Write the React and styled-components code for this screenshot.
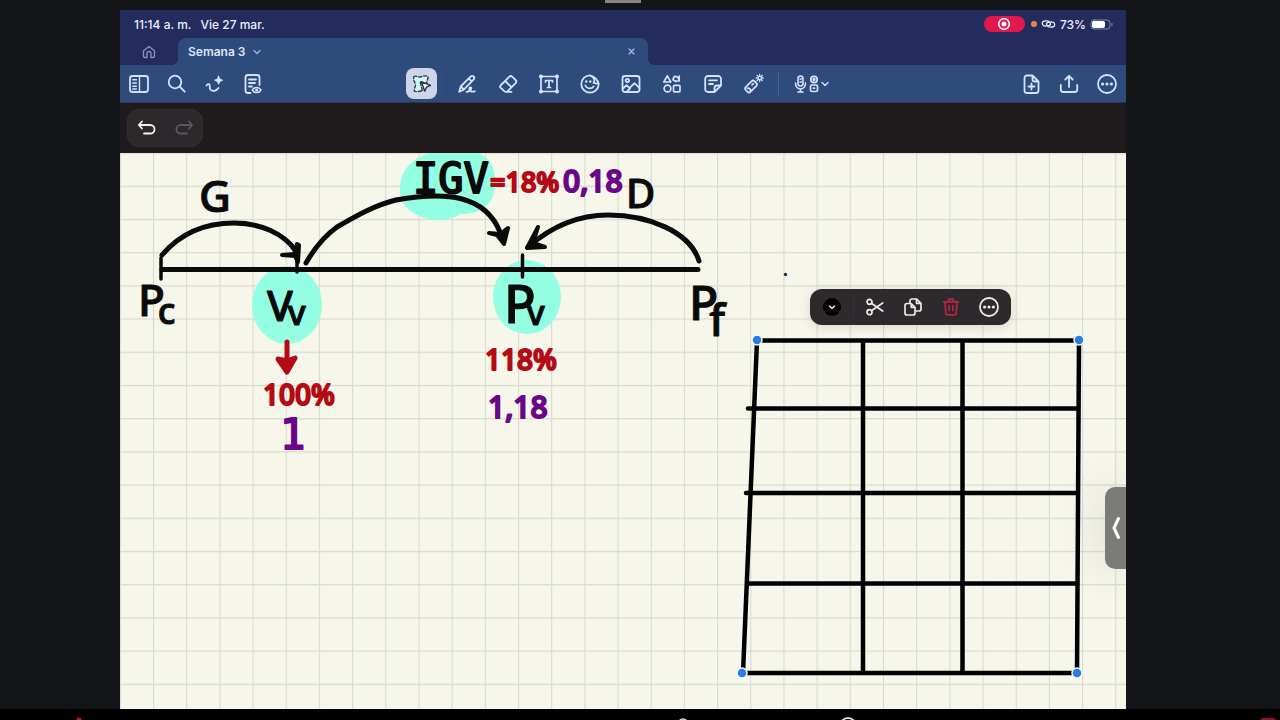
import React from "react";
import styled, { createGlobalStyle, css } from "styled-components";

const GlobalStyle = createGlobalStyle`
  * { box-sizing: border-box; }
  body {
    margin: 0;
    background: #141519;
    font-family: Inter, "Liberation Sans", sans-serif;
  }
  button { font: inherit; color: inherit; background: none; border: 0; padding: 0; cursor: pointer; }
`;

const Page = styled.div`
  min-height: 100vh;
  display: flex;
  flex-direction: column;
`;

const TopEdge = styled.div`
  height: 10px;
  display: flex;
  justify-content: center;
  padding-right: 34px;
`;

const Grabber = styled.span`
  width: 36px;
  height: 3px;
  background: #858487;
`;

const Stage = styled.div`
  flex: 1;
  display: grid;
  grid-template-columns: 120px minmax(0, 1fr) 154px;
`;

const Tablet = styled.main`
  grid-column: 2;
  display: flex;
  flex-direction: column;
  background: #f6f6ea;
`;

const StatusBar = styled.div`
  height: 28px;
  display: flex;
  align-items: center;
  justify-content: space-between;
  padding: 0 12px 0 14px;
  background: #232c5c;
  color: #eceefa;
  font-size: 12px;
  font-weight: 500;
`;

const StatusGroup = styled.div`
  display: flex;
  align-items: center;
  gap: ${(p) => p.$gap}px;
`;

const RecordPill = styled.span`
  width: 41px;
  height: 16px;
  margin-right: 2px;
  border-radius: 8px;
  background: #e0184c;
  display: grid;
  place-items: center;
`;

const OrangeDot = styled.span`
  width: 6px;
  height: 6px;
  border-radius: 50%;
  background: #e58a4c;
`;

const TabStrip = styled.nav`
  height: 27px;
  display: flex;
  background: #232c5c;
  color: #dbe5fb;
`;

const HomeButton = styled.button`
  width: 58px;
  display: grid;
  place-items: center;
  color: #8894bf;
`;

const Tab = styled.div`
  position: relative;
  width: 470px;
  padding: 0 12px 0 10px;
  display: flex;
  align-items: center;
  justify-content: space-between;
  background: #2e4b7c;
  border-radius: 8px 8px 0 0;
  &::before, &::after {
    content: "";
    position: absolute;
    bottom: 0;
    width: 6px;
    height: 6px;
  }
  &::before { right: 100%; background: radial-gradient(circle at 0 0, transparent 6px, #2e4b7c 6px); }
  &::after { left: 100%; background: radial-gradient(circle at 100% 0, transparent 6px, #2e4b7c 6px); }
`;

const TabTitle = styled.button`
  display: flex;
  align-items: center;
  gap: 7px;
  font-size: 12px;
  font-weight: 600;
  svg { color: #9db4dd; }
`;

const CloseButton = styled.button`
  display: grid;
  place-items: center;
  color: #a9bce2;
`;

const Toolbar = styled.div`
  height: 38px;
  display: grid;
  grid-template-columns: 1fr auto 1fr;
  align-items: center;
  background: #2e4b7c;
  border-bottom: 1px solid #29365f;
  color: #d3e3fd;
`;

const ToolGroup = styled.div`
  display: flex;
  align-items: center;
  justify-self: ${(p) => p.$side || "center"};
`;

const ToolButton = styled.button`
  width: ${(p) => p.$width}px;
  height: 31px;
  display: flex;
  align-items: center;
  justify-content: center;
  gap: 2px;
  ${(p) => p.$selected && css`
    border-radius: 8px;
    background: #ccd5ea;
    color: #2c3548;
  `}
`;

const Divider = styled.span`
  width: 1px;
  height: 24px;
  margin: 0 ${(p) => p.$gap}px;
  background: ${(p) => p.$color};
`;

const HistoryBar = styled.div`
  height: 50px;
  display: flex;
  align-items: center;
  padding: 0 7px;
  background: #1f1b1d;
`;

const HistoryPill = styled.div`
  width: 76px;
  height: 38px;
  display: flex;
  border: 1px solid #353032;
  border-radius: 12px;
  background: #2d282b;
`;

const HistoryButton = styled.button`
  flex: 1;
  display: grid;
  place-items: center;
  color: #f2f0f1;
  &:disabled { color: #5c575a; }
`;

const Canvas = styled.section`
  position: relative;
  overflow: hidden;
`;

const Sheet = styled.svg`
  display: block;
  width: 100%;
  height: auto;
`;

const SelectionMenu = styled.div`
  position: absolute;
  left: 690px;
  top: 136px;
  height: 36px;
  display: flex;
  align-items: center;
  padding: 0 3px;
  border-radius: 12px;
  background: #2e292c;
  color: #ece9ea;
  box-shadow: 0 2px 12px rgba(0, 0, 0, 0.12);
`;

const MenuButton = styled.button`
  width: 38px;
  height: 36px;
  display: grid;
  place-items: center;
  color: ${(p) => (p.$danger ? "#b92548" : "inherit")};
`;

const SideHandle = styled.button`
  position: absolute;
  right: 0;
  top: 334px;
  width: 21px;
  height: 82px;
  border-radius: 10px 0 0 10px;
  background: #7b7b79;
  color: #fff;
  display: grid;
  place-items: center;
  box-shadow: 0 0 48px rgba(0, 0, 0, 0.16);
`;

const PlayerEdge = styled.footer`
  height: 11px;
  background: #000;
  overflow: hidden;
`;

const EdgeArt = styled.svg`
  display: block;
  width: 100%;
  height: 11px;
`;

function Icon({ size = 22, w, h, sw = 1.8, children }) {
  const width = w || size;
  const height = h || size;
  return (
    <svg width={width} height={height} viewBox={`0 0 ${width} ${height}`} fill="none" stroke="currentColor"
      strokeWidth={sw} strokeLinecap="round" strokeLinejoin="round" aria-hidden="true">
      {children}
    </svg>
  );
}

const dot = (cx, cy, r) => <circle cx={cx} cy={cy} r={r} fill="currentColor" stroke="none" />;

const SidebarIcon = () => (
  <Icon><rect x="2" y="3" width="18" height="16" rx="2.5" /><path d="M11.5 3v16M4.8 6.8h3.6M4.8 10h3.6M4.8 13.2h3.6M4.8 16h3.6" strokeWidth="1.4" /></Icon>
);
const SearchIcon = () => <Icon><circle cx="9" cy="9" r="6.3" /><path d="m13.700 13.700 5 5" /></Icon>;
const SparkPenIcon = () => (
  <Icon><path d="M2.500 12.600c1-1.600 2.300-2 3-1 .9 1.500-.6 3.300.8 4.900 2.200 2.400 6 1.500 8.200-1.500" /><path d="M14.600 3.200 15.800 6l2.800 1.200-2.800 1.200-1.200 2.800-1.200-2.800-2.800-1.200L13.400 6z" fill="currentColor" strokeWidth="1" /></Icon>
);
const PageViewIcon = () => (
  <Icon><path d="M8.500 20H6a2.500 2.500 0 0 1-2.500-2.500v-13A2.500 2.500 0 0 1 6 2h9a2.500 2.500 0 0 1 2.500 2.500V12M7 6.500h7M7 10h6M7 13.500h3" /><path d="M10.300 17c2-3.400 6.700-3.400 8.700 0-2 3.400-6.700 3.400-8.700 0z" strokeWidth="1.500" />{dot(14.600, 17, 1.500)}</Icon>
);
const LassoIcon = () => (
  <Icon sw={1.4}>
    <path d="M3 3.500c2.500-1.400 4.500 1.400 7 .3s4.500-1.300 7-.3c.6 3-2.200 4.300-1 7L9 8.500l2.500 9.500c-2.500-.5-5 1.500-8 .2-1-2.700 1.800-4.500.8-7.400S2 6.500 3 3.500z" fill="#cff7f3" strokeDasharray="3 2" />
    <path d="m10.500 8.800 9 3.600-4 1.800-1.800 4z" fill="#fff" />
  </Icon>
);
const PenIcon = () => (
  <Icon><path d="m3.200 18.800 1.500-5.300L14.500 3.600c1-1 2.300-1 3.100-.1.900.9.900 2.100-.1 3.100L7.800 16.700zM4.800 13.500l3 3M12.800 5.400l2.900 2.900" /><path d="M10.500 18.800c2.200.3 4.600-1.700 4.800-3.500.1-1.400-2-1.100-2 .5 0 2.200 2.300 3.600 5.500 2.500" /></Icon>
);
const EraserIcon = () => (
  <Icon><path d="m3.500 12.500 8.700-8.700a2.300 2.300 0 0 1 3.200 0l3.200 3.200a2.300 2.300 0 0 1 0 3.200l-7.900 7.900c-1 1-2.500 1-3.500 0L3.500 14.700c-.6-.6-.6-1.500 0-2.200zM8.200 8l6.200 6.200M9.500 18.800h5" /></Icon>
);
const TextBoxIcon = () => (
  <Icon sw={1.700}><rect x="3" y="3.500" width="16" height="15" /><path d="M7.500 9V7.500h7V9M11 7.500v7M9.500 14.500h3" />{[3, 19].map((x) => [3.500, 18.500].map((y) => <circle key={`${x}-${y}`} cx={x} cy={y} r="1.200" fill="#d3e3fd" />))}</Icon>
);
const StickerIcon = () => (
  <Icon><path d="M11 2.300a8.700 8.700 0 1 0 8.700 8.700C19 7 15 3 11 2.300zM11 2.300c4 1.500 5.500 4.700 3.500 7.500 2 .5 4 .7 5.200 1.200" /><path d="M6.300 12.500c1.500 3.500 6 3.800 8.300 1" />{dot(7.300, 8.500, 1.200)}{dot(11.300, 8.500, 1.200)}</Icon>
);
const ImageIcon = () => (
  <Icon><rect x="2.500" y="3" width="17" height="16" rx="2.500" /><circle cx="7.300" cy="7.500" r="1.700" /><path d="m3 15.500 3.500-3.300 3 3 5-5 5 5M7 18.500l3-3" /></Icon>
);
const ShapesIcon = () => (
  <Icon sw={1.700}><path d="M6.300 2.800 9.800 9h-7z" /><circle cx="6.500" cy="15.500" r="3.400" /><rect x="12.500" y="12.300" width="6.500" height="6.500" rx="1" /><path d="M12 6.800c.5-4.500 4-4.500 5.700-.8M12 6.800l2.800 1.700M18.200 3v5h-3.500" /></Icon>
);
const NoteIcon = () => (
  <Icon><path d="M12.500 19H6a2.800 2.800 0 0 1-2.800-2.800V5.800A2.800 2.800 0 0 1 6 3h10.200A2.800 2.800 0 0 1 19 5.800v6.700zM19 12.500h-4a2.500 2.500 0 0 0-2.500 2.500v4M7 7.300h8M7 11h4" /></Icon>
);
const LaserIcon = () => (
  <Icon sw={1.700}><path d="m2.700 14.200 6-6a2 2 0 0 1 2.800 0l1.900 1.900a2 2 0 0 1 0 2.800l-6 6a2 2 0 0 1-2.800 0l-1.900-1.900a2 2 0 0 1 0-2.800zM9 12l1.300-1.300M4.400 15.300a2.300 2.300 0 0 1 3 2.600" /><path d="M16.700 1.500v2M16.700 6.500v2M13.200 5h2M18.200 5h2M14.200 2.500l1.300 1.300M17.900 6.200l1.300 1.300M19.200 2.500l-1.300 1.300M15.500 6.200l-1.300 1.300" strokeWidth="1.300" /></Icon>
);
const MicIcon = () => <Icon w={13} h={20} sw={1.600}><rect x="4" y="2" width="5" height="10" rx="2.500" /><path d="M1.500 9c0 8 10 8 10 0M6.500 15v3M4 18h5M6 5h1.500M6 8h1.500" /></Icon>;
const LinkedNotesIcon = () => <Icon w={10} h={20} sw={1.700}><circle cx="5" cy="5.500" r="3.200" /><rect x="1.500" y="11" width="7" height="6.500" rx="1.500" /><circle cx="5" cy="5.500" r=".8" /><path d="M4.500 14.200h1" /></Icon>;
const ChevronIcon = () => <Icon size={8} sw={1.400}><path d="m1 2.500 3 3 3-3" /></Icon>;
const AddPageIcon = () => <Icon><path d="M12.500 2.500H7A2.500 2.500 0 0 0 4.500 5v12.500A2.500 2.500 0 0 0 7 20h9a2.500 2.500 0 0 0 2.500-2.500v-9zM12.500 2.500v3.700c0 1.500.8 2.300 2.300 2.300h3.700M11.500 10.500v6M8.500 13.500h6" /></Icon>;
const ShareIcon = () => <Icon><path d="M2.800 12v4.500A2.500 2.500 0 0 0 5.300 19h11.400a2.500 2.500 0 0 0 2.500-2.500V12M11 14V3M7.300 6.500 11 2.800l3.700 3.700" /></Icon>;
const MoreIcon = () => <Icon><circle cx="11" cy="11" r="9" />{dot(6.600, 11, 1.600)}{dot(11, 11, 1.600)}{dot(15.400, 11, 1.600)}</Icon>;
const HomeIcon = () => <Icon size={14} sw={1.300}><path d="M1.500 5.800 7 1.500l5.500 4.300v5.200a1.500 1.500 0 0 1-1.500 1.500H9V8.500a2 2 0 0 0-4 0v4H3A1.500 1.500 0 0 1 1.500 11z" /></Icon>;
const CloseIcon = () => <Icon size={9} sw={1.200}><path d="m2 2 5 5M7 2 2 7" /></Icon>;
const UndoIcon = () => <Icon size={20} sw={1.800}><path d="M5 3.500 1.800 7 5 10.500M2.500 7h10.800a4 4 0 0 1 0 8.500H7" /></Icon>;
const RedoIcon = () => <Icon size={20} sw={1.800}><path d="M15 3.500 18.200 7 15 10.500M17.500 7H6.700a4 4 0 0 0 0 8.500H13" /></Icon>;
const ScissorsIcon = () => <Icon size={20} sw={1.700}><circle cx="4.500" cy="4.800" r="2.500" /><circle cx="4.500" cy="15.200" r="2.500" /><path d="m6.700 6.500 11 7.500M6.700 13.500l11-7.500" /></Icon>;
const CopyIcon = () => <Icon size={20} sw={1.700}><path d="M4 6.500h4.200L12 10.300V16a2 2 0 0 1-2 2H4a2 2 0 0 1-2-2V8.500a2 2 0 0 1 2-2zM8.200 6.500v3.800H12M7 6.300V4a2 2 0 0 1 2-2h4.700L18 6.300V12a2 2 0 0 1-2 2h-3.500M13.500 2v4.300H18" /></Icon>;
const TrashIcon = () => <Icon size={20} sw={1.700}><path d="M2.500 4.800h15M7.200 4.500l.7-2.300h4.200l.7 2.300M4 5l.8 11a2 2 0 0 0 2 1.900h6.400a2 2 0 0 0 2-1.900L16 5M8.200 8.500v5M11.800 8.500v5" /></Icon>;
const ColorIcon = () => <Icon size={18} sw={1.400}><circle cx="9" cy="9" r="9" fill="#000" stroke="none" /><path d="m6.500 8 2.500 2.500L11.500 8" /></Icon>;
const HandleIcon = () => <Icon w={10} h={24} sw={3}><path d="M7.500 2.500 3 12l4.500 9.500" /></Icon>;
const RecordIcon = () => <Icon size={14} sw={1.700}><circle cx="7" cy="7" r="5.300" />{dot(7, 7, 2.500)}</Icon>;
const LinkIcon = () => <Icon w={15} h={10} sw={1.300}><path d="M9.500 4.800C9 1 1.300.8 1.300 4.300c0 1.800 1.700 3 3.700 2.900M5.500 5.200C6 9 13.700 9.200 13.700 5.700c0-1.800-1.700-3-3.700-2.900M5.500 5.200c0-1.300 1-2 2.500-2M9.500 4.800c0 1.300-1 2-2.500 2" /></Icon>;
const BatteryIcon = () => (
  <Icon w={24} h={11} sw={1}><rect x="1" y="1" width="19" height="9" rx="3" stroke="#7e86ad" /><rect x="2" y="2" width="13" height="7" rx="2" fill="#fff" stroke="none" /><path d="M22 4.500v2" stroke="#7e86ad" /></Icon>
);

const TOOLS = [
  ["Bolígrafo", PenIcon], ["Borrador", EraserIcon], ["Texto", TextBoxIcon], ["Pegatina", StickerIcon],
  ["Imagen", ImageIcon], ["Formas", ShapesIcon], ["Nota", NoteIcon], ["Puntero láser", LaserIcon],
];

const Ink = styled.g`
  fill: ${(p) => p.$fill || "none"};
  stroke: ${(p) => p.$color || "#0b0a0a"};
  stroke-width: ${(p) => p.$width || 5};
  stroke-linecap: round;
  stroke-linejoin: round;
`;

const Handwriting = styled.text`
  font-family: ${(p) => (p.$mono ? '"DejaVu Sans Mono", monospace' : '"Noto Sans", sans-serif')};
  font-size: ${(p) => p.$size}px;
  font-weight: ${(p) => (p.$mono ? 400 : 500)};
  fill: ${(p) => p.$color || "#0b0a0a"};
  stroke: ${(p) => p.$color || "#0b0a0a"};
  stroke-width: ${(p) => p.$weight || 1}px;
  stroke-linejoin: round;
`;

const Subscript = styled.tspan`
  font-size: ${(p) => p.$size}px;
`;

const RED = "#b40a16";
const PURPLE = "#6a0788";

const NOTES = [
  { t: "G", x: 199, y: 212, size: 44 },
  { t: "D", x: 626, y: 208, size: 40 },
  { t: "IGV", x: 413, y: 193, size: 42, mono: true, weight: 2 },
  { t: "=18%", x: 490, y: 192, size: 27, color: RED, weight: 2 },
  { t: "0,18", x: 563, y: 192, size: 30, color: PURPLE, weight: 2 },
  { t: "P", x: 138, y: 316, size: 44, sub: "c", dx: -7, dy: 8, subSize: 36 },
  { t: "V", x: 267, y: 321, size: 42, sub: "v", dx: -5, dy: 4, subSize: 34 },
  { t: "P", x: 504, y: 323, size: 52, sub: "v", dx: -9, dy: 2, subSize: 34 },
  { t: "P", x: 689, y: 320, size: 48, sub: "f", dx: -9, dy: 16, subSize: 44 },
  { t: "100%", x: 263, y: 405, size: 28, color: RED, weight: 2 },
  { t: "1", x: 280, y: 449, size: 42, mono: true, color: PURPLE, weight: 2 },
  { t: "118%", x: 485, y: 370, size: 28, color: RED, weight: 2 },
  { t: "1,18", x: 488, y: 418, size: 30, color: PURPLE, weight: 2 },
];

const CORNERS = [[757, 340], [1079, 340], [742, 673], [1077, 673]];

function NotebookSheet() {
  return (
    <Sheet viewBox="120 153 1006 556" role="img" aria-label="Apuntes de Semana 3">
      <defs>
        <pattern id="squares" x="153" y="185.700" width="33.180" height="33.200" patternUnits="userSpaceOnUse">
          <path d="M.5 0v33.200M0 .5h33.200" stroke="#d9dace" strokeWidth="1.200" fill="none" />
        </pattern>
      </defs>
      <rect x="120" y="153" width="1006" height="556" fill="#f6f6ea" />
      <rect x="120" y="153" width="1006" height="556" fill="url(#squares)" />
      <g fill="#94fee3">
        <ellipse cx="287" cy="305" rx="35" ry="39" />
        <ellipse cx="527" cy="297" rx="34" ry="37" />
        <path d="M400 190c0-20 12-32 30-37h48c14 6 18 17 17 33-1 18-14 28-34 28-13 8-31 8-44 1-10-5-17-12-17-25z" />
      </g>
      <Ink>
        <path d="M162 269.500H698" />
        <path d="M161 279V258M297 255v17M522.500 255v22" strokeWidth="3.500" />
        <path d="M162 255c17-20 41-32 72-32 27 0 50 11 61 27" />
        <path d="M306 263c8-14 17-26 31-36 19-11 38-22 59-27 50-9 89-5 104 32" />
        <path d="M528 247c24-21 49-32 80-32 41 0 82 17 91 46" />
      </Ink>
      <Ink $fill="#0b0a0a" $width={4}>
        <path d="M282 255l12-1 3-10 2 1-1 17-3-6z" />
        <path d="M489 233l11 1 8-6-4 16-7-9z" />
        <path d="M538 227l-11 21 18-1-12-4z" />
      </Ink>
      <Ink $color={RED} $fill={RED}>
        <path d="M287 342v28M278 359l9 13 8-14-8 3z" />
      </Ink>
      {NOTES.map((n) => (
        <Handwriting key={`${n.t}${n.x}`} x={n.x} y={n.y} $size={n.size} $mono={n.mono} $color={n.color} $weight={n.weight}>
          {n.t}
          {n.sub && <Subscript dx={n.dx} dy={n.dy} $size={n.subSize}>{n.sub}</Subscript>}
        </Handwriting>
      ))}
      <Ink $color="#000" $width={4.500}>
        <path d="M757 340.500H1079L1077 673H743zM863 341V672M962.500 341V672M748 408.500H1078M746 493H1078M748 583.500H1077" />
      </Ink>
      <g fill="#2b7be0" stroke="#f4fbff" strokeWidth="1.500">
        {CORNERS.map(([x, y]) => <circle key={`${x}-${y}`} cx={x} cy={y} r="5" />)}
      </g>
      <circle cx="785.500" cy="274.500" r="1.700" fill="#262b55" />
    </Sheet>
  );
}

export default function App() {
  return (
    <Page>
      <GlobalStyle />
      <TopEdge><Grabber /></TopEdge>
      <Stage>
        <Tablet>
          <StatusBar>
            <StatusGroup $gap={9}><span>11:14 a. m.</span><span>Vie 27 mar.</span></StatusGroup>
            <StatusGroup $gap={4}>
              <RecordPill><RecordIcon /></RecordPill>
              <OrangeDot />
              <LinkIcon />
              <span>73%</span>
              <BatteryIcon />
            </StatusGroup>
          </StatusBar>
          <TabStrip>
            <HomeButton aria-label="Inicio"><HomeIcon /></HomeButton>
            <Tab>
              <TabTitle>Semana 3 <ChevronIcon /></TabTitle>
              <CloseButton aria-label="Cerrar pestaña"><CloseIcon /></CloseButton>
            </Tab>
          </TabStrip>
          <Toolbar>
            <ToolGroup $side="start">
              <ToolButton $width={38} aria-label="Barra lateral"><SidebarIcon /></ToolButton>
              <ToolButton $width={38} aria-label="Buscar"><SearchIcon /></ToolButton>
              <ToolButton $width={38} aria-label="Asistente"><SparkPenIcon /></ToolButton>
              <ToolButton $width={38} aria-label="Modo lectura"><PageViewIcon /></ToolButton>
            </ToolGroup>
            <ToolGroup>
              <ToolButton $width={31} $selected aria-label="Lazo" aria-pressed="true"><LassoIcon /></ToolButton>
              <Divider $gap={4} $color="#34507f" />
              {TOOLS.map(([label, Glyph]) => (
                <ToolButton key={label} $width={41} aria-label={label}><Glyph /></ToolButton>
              ))}
              <Divider $gap={4} $color="#45639a" />
              <ToolButton $width={57} aria-label="Grabar audio"><MicIcon /><LinkedNotesIcon /><ChevronIcon /></ToolButton>
            </ToolGroup>
            <ToolGroup $side="end">
              <ToolButton $width={38} aria-label="Añadir página"><AddPageIcon /></ToolButton>
              <ToolButton $width={38} aria-label="Compartir"><ShareIcon /></ToolButton>
              <ToolButton $width={38} aria-label="Más"><MoreIcon /></ToolButton>
            </ToolGroup>
          </Toolbar>
          <HistoryBar>
            <HistoryPill>
              <HistoryButton aria-label="Deshacer"><UndoIcon /></HistoryButton>
              <HistoryButton aria-label="Rehacer" disabled><RedoIcon /></HistoryButton>
            </HistoryPill>
          </HistoryBar>
          <Canvas>
            <NotebookSheet />
            <SelectionMenu>
              <MenuButton aria-label="Color"><ColorIcon /></MenuButton>
              <Divider $gap={2} $color="#353033" />
              <MenuButton aria-label="Cortar"><ScissorsIcon /></MenuButton>
              <MenuButton aria-label="Copiar"><CopyIcon /></MenuButton>
              <MenuButton $danger aria-label="Eliminar"><TrashIcon /></MenuButton>
              <MenuButton aria-label="Más opciones"><MoreIcon /></MenuButton>
            </SelectionMenu>
            <SideHandle aria-label="Abrir panel"><HandleIcon /></SideHandle>
          </Canvas>
        </Tablet>
      </Stage>
      <PlayerEdge>
        <EdgeArt viewBox="0 0 1280 11" preserveAspectRatio="xMidYMin slice" aria-hidden="true">
          <circle cx="79" cy="11" r="2.500" fill="#c0143c" />
          <circle cx="683" cy="15" r="5" fill="none" stroke="#d8d8d8" strokeWidth="1.500" />
          <circle cx="848" cy="17" r="8" fill="none" stroke="#d8d8d8" strokeWidth="2" />
          <rect x="1260" y="9" width="16" height="6" rx="3" fill="#8e1030" />
        </EdgeArt>
      </PlayerEdge>
    </Page>
  );
}
